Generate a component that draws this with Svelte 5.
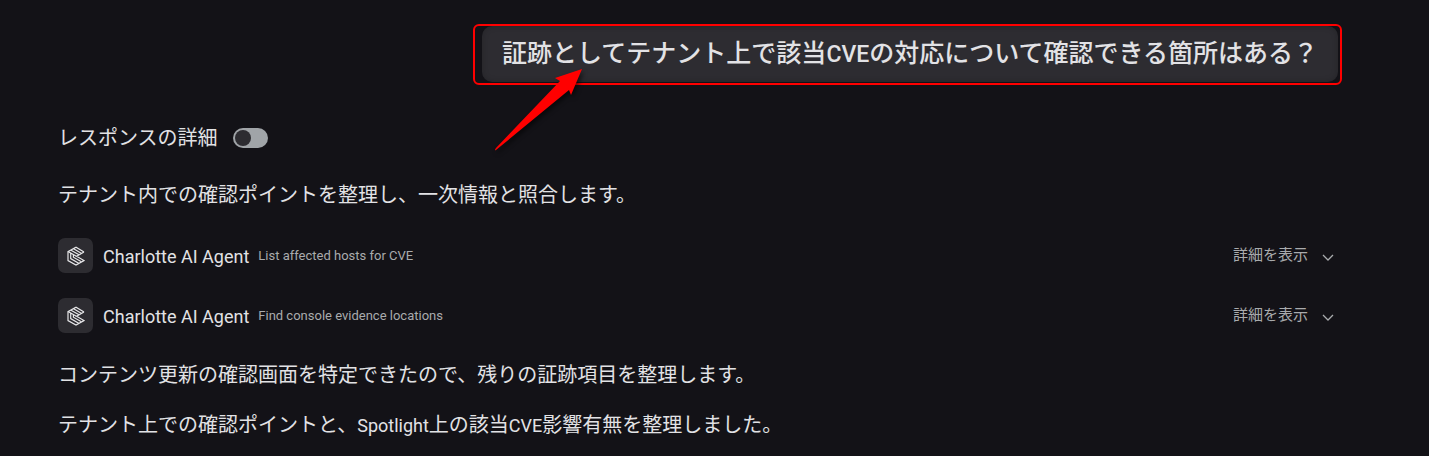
<script>
  const steps = [
    { agent: 'Charlotte AI Agent', task: 'List affected hosts for CVE' },
    { agent: 'Charlotte AI Agent', task: 'Find console evidence locations' },
  ];
  let detailed = $state(false);
</script>

<main class="chat">
  <div class="question">
    <p class="bubble">証跡としてテナント上で該当<span class="latin">CVE</span>の対応について確認できる箇所はある？</p>
    <svg class="arrow" viewBox="0 0 88 84" aria-hidden="true">
      <path d="M87 1 L76 27 L74 22 L1 82 Q-1 83 1 80 L65 13 L60 10 Z" />
    </svg>
  </div>

  <label class="toggle">
    <span>レスポンスの詳細</span>
    <input type="checkbox" role="switch" bind:checked={detailed} />
  </label>

  <p class="text">テナント内での確認ポイントを整理し、一次情報と照合します。</p>

  {#each steps as step}
    <section class="step">
      <span class="badge">
        <svg viewBox="0 0 18 20" aria-hidden="true">
          <path d="M17 6 9 1.2 1 5.6v9L9 19l8-4.5-7.4-4.2L17 6" />
          <path d="M14.6 7.4 6.6 2.8M12 8.8 4 4.2M1 5.6l8.4 4.7M3.7 7.2v5.4l8 4.6M6.4 8.8v2.4l8 4.6" />
        </svg>
      </span>
      <span class="agent">{step.agent}</span>
      <span class="task">{step.task}</span>
      <button class="more" type="button">
        <span>詳細を表示</span>
        <svg viewBox="0 0 12 8" aria-hidden="true"><path d="M1 1l5 5 5-5" /></svg>
      </button>
    </section>
  {/each}

  <p class="text">コンテンツ更新の確認画面を特定できたので、残りの証跡項目を整理します。</p>
  <p class="text last">テナント上での確認ポイントと、<span class="latin">Spotlight</span>上の該当<span class="latin">CVE</span>影響有無を整理しました。</p>
</main>

<style>
  :global(body) {
    margin: 0;
    background: #131217;
  }
  .chat {
    box-sizing: border-box;
    padding: 24px 87px 14px 58px;
    color: #e2e2e5;
    font-family: Roboto, 'Noto Sans CJK JP', sans-serif;
    font-size: 20px;
    line-height: 30px;
  }
  p {
    margin: 0;
  }
  .latin {
    font-size: 18px;
    line-height: 1;
  }
  .question {
    position: relative;
    width: fit-content;
    margin-left: auto;
    padding: 0 2px 1px 7px;
    border: 2px solid #f00;
    border-radius: 6px;
  }
  .bubble {
    padding: 11px 20px;
    border-radius: 10px;
    background: #2d2c31;
    box-shadow: inset 0 0 6px #0003;
    font-size: 25px;
    font-weight: 500;
    line-height: 34px;
  }
  .bubble .latin {
    font-size: 23px;
  }
  .arrow {
    position: absolute;
    left: 20px;
    top: 42px;
    width: 88px;
    height: 84px;
    fill: #f00;
    filter: drop-shadow(2px 3px 2px #0008);
  }
  .toggle {
    display: flex;
    align-items: center;
    gap: 15px;
    width: fit-content;
    margin-top: 38px;
  }
  .toggle input {
    appearance: none;
    display: flex;
    align-items: center;
    box-sizing: border-box;
    width: 35px;
    height: 20px;
    margin: 0;
    padding: 2px;
    border-radius: 10px;
    background: #a0a4a8;
  }
  .toggle input::before {
    content: '';
    width: 16px;
    height: 16px;
    border-radius: 50%;
    background: #2d2c31;
  }
  .toggle input:checked {
    justify-content: flex-end;
  }
  .text {
    margin-top: 27px;
  }
  .step {
    display: flex;
    align-items: center;
    height: 35px;
    margin-top: 25px;
  }
  .text + .step {
    margin-top: 28px;
  }
  .text.last {
    margin-top: 20px;
  }
  .badge {
    display: grid;
    place-items: center;
    width: 35px;
    height: 35px;
    border-radius: 7px;
    background: #2d2c31;
  }
  .badge svg {
    width: 18px;
    height: 20px;
    fill: none;
    stroke: #e6e6e8;
    stroke-width: 1.2;
  }
  .agent {
    margin-left: 10px;
    padding-top: 2px;
    font-size: 18px;
  }
  .task {
    margin-left: 9px;
    color: #a9abad;
    font-size: 13px;
  }
  .more {
    display: flex;
    align-items: center;
    gap: 14px;
    margin-left: auto;
    padding: 0 8px 2px 0;
    border: 0;
    background: none;
    color: #a9abad;
    font: inherit;
    font-size: 15px;
  }
  .more svg {
    width: 12px;
    height: 8px;
    margin-top: 7px;
    fill: none;
    stroke: currentColor;
    stroke-width: 1.3;
  }
</style>
